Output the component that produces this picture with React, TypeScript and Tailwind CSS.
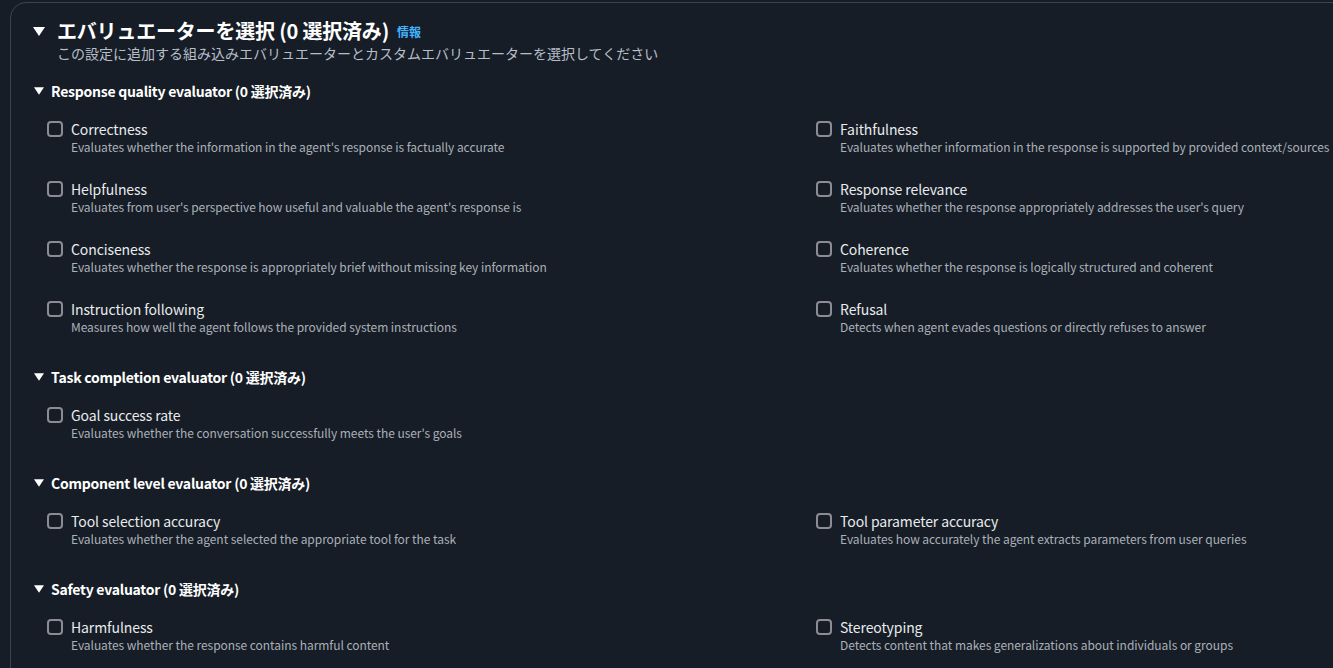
import React from "react";

interface Evaluator {
  name: string;
  desc: string;
}

interface Section {
  title: string;
  items: Evaluator[];
}

const sections: Section[] = [
  {
    title: "Response quality evaluator (0 選択済み)",
    items: [
      { name: "Correctness", desc: "Evaluates whether the information in the agent's response is factually accurate" },
      { name: "Faithfulness", desc: "Evaluates whether information in the response is supported by provided context/sources" },
      { name: "Helpfulness", desc: "Evaluates from user's perspective how useful and valuable the agent's response is" },
      { name: "Response relevance", desc: "Evaluates whether the response appropriately addresses the user's query" },
      { name: "Conciseness", desc: "Evaluates whether the response is appropriately brief without missing key information" },
      { name: "Coherence", desc: "Evaluates whether the response is logically structured and coherent" },
      { name: "Instruction following", desc: "Measures how well the agent follows the provided system instructions" },
      { name: "Refusal", desc: "Detects when agent evades questions or directly refuses to answer" },
    ],
  },
  {
    title: "Task completion evaluator (0 選択済み)",
    items: [
      { name: "Goal success rate", desc: "Evaluates whether the conversation successfully meets the user's goals" },
    ],
  },
  {
    title: "Component level evaluator (0 選択済み)",
    items: [
      { name: "Tool selection accuracy", desc: "Evaluates whether the agent selected the appropriate tool for the task" },
      { name: "Tool parameter accuracy", desc: "Evaluates how accurately the agent extracts parameters from user queries" },
    ],
  },
  {
    title: "Safety evaluator (0 選択済み)",
    items: [
      { name: "Harmfulness", desc: "Evaluates whether the response contains harmful content" },
      { name: "Stereotyping", desc: "Detects content that makes generalizations about individuals or groups" },
    ],
  },
];

const Caret: React.FC<{ w: number; h: number; className?: string }> = ({ w, h, className }) => (
  <svg width={w} height={h} viewBox="0 0 12 9" className={className}>
    <path d="M0 0 L12 0 L6 9 Z" fill="#ffffff" />
  </svg>
);

const Item: React.FC<{ item: Evaluator }> = ({ item }) => (
  <label className="flex gap-2">
    <span className="mt-[2px] w-4 h-4 shrink-0 rounded-[4px] border-2 border-[#8c8c94]" />
    <span className="flex flex-col">
      <span className="text-sm leading-5 text-[#e9ebed] tracking-[-0.1px]">{item.name}</span>
      <span className="text-xs leading-4 text-[#aab0b8] whitespace-nowrap tracking-[-0.05px]">{item.desc}</span>
    </span>
  </label>
);

export default function App() {
  return (
    <div
      className="w-screen h-screen overflow-hidden bg-[#161d26] pt-[2px] pl-[10px]"
      style={{ fontFamily: '"Noto Sans CJK JP", "Noto Sans", sans-serif' }}
    >
      <div className="w-[1500px] h-[800px] rounded-2xl border border-[#3b434e] pt-4 pl-[22px]">
        <div className="flex items-center gap-3 h-6">
          <Caret w={12} h={9} />
          <h2 className="text-xl leading-6 font-bold text-white tracking-[-0.2px]">
            エバリュエーターを選択 (0 選択済み)
          </h2>
          <a className="text-xs font-bold text-[#42b4ff] -ml-1 mt-[2px]">情報</a>
        </div>
        <p className="pl-6 text-sm leading-5 text-[#b6bec9]">
          この設定に追加する組み込みエバリュエーターとカスタムエバリュエーターを選択してください
        </p>

        <div className="mt-[18px] flex flex-col gap-[32px]">
          {sections.map((s) => (
            <section key={s.title}>
              <div className="flex items-center gap-2 h-5">
                <Caret w={10} h={8} className="ml-[1px]" />
                <h3 className="-ml-[1px] text-sm font-bold text-white tracking-[-0.25px]">{s.title}</h3>
              </div>
              <div className="mt-[18px] pl-[14px] grid grid-cols-[769px_1fr] gap-y-6">
                {s.items.map((it) => (
                  <Item key={it.name} item={it} />
                ))}
              </div>
            </section>
          ))}
        </div>
      </div>
    </div>
  );
}
